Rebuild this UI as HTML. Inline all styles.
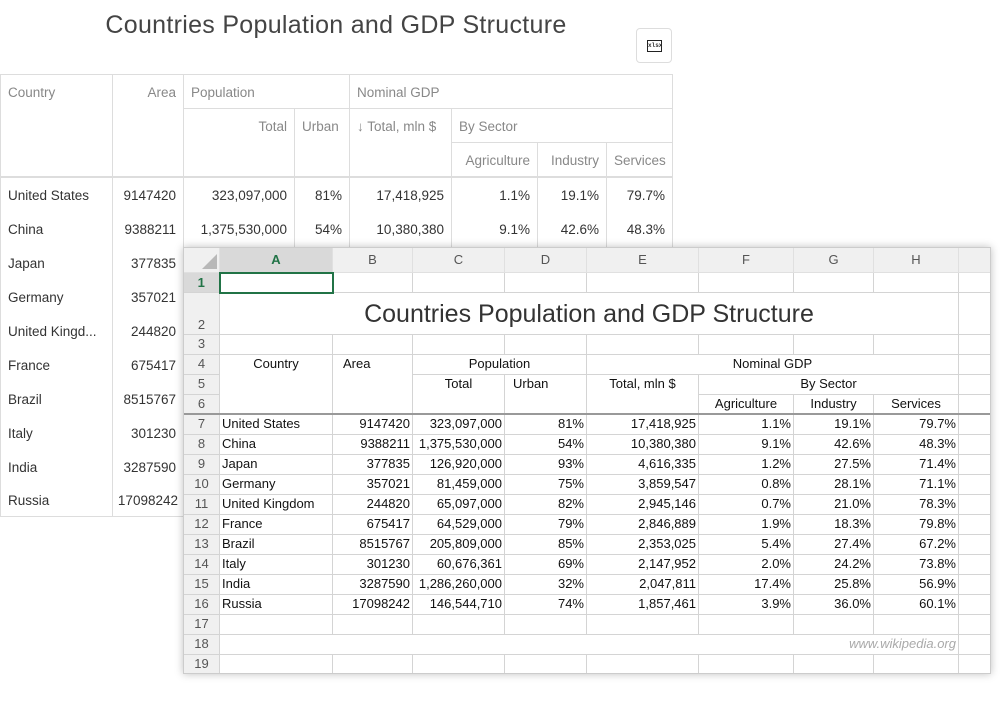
<!DOCTYPE html>
<html><head><meta charset="utf-8"><style>
*{box-sizing:border-box;margin:0;padding:0}
body{width:1008px;height:706px;background:#fff;font-family:"Liberation Sans",sans-serif;position:relative;overflow:hidden}
.title{position:absolute;left:0;width:672px;top:11px;text-align:center;font-size:25px;color:#444;font-weight:normal;letter-spacing:0.3px}
.btn{position:absolute;left:636px;top:28px;width:36px;height:35px;border:1px solid #ddd;border-radius:4px;background:#fff}
.btn span{position:absolute;left:10px;top:11px;width:15px;height:12px;border:1.5px solid #222;font:bold 6px "Liberation Mono",monospace;line-height:9px;text-align:center;color:#333;background:#fff}
table.g{position:absolute;left:0;top:74px;width:672px;border-collapse:collapse;table-layout:fixed;font-size:13.5px;color:#333}
table.g td{border:1px solid #ddd;height:34px;padding:0 7px;white-space:nowrap;overflow:hidden}
table.g .h{color:#888;vertical-align:top;padding-top:10px}
table.g tr.b td{border-top:none;border-bottom:none;padding-top:3px}
table.g tr.f td{border-top:2px solid #ddd}
.r{text-align:right}
.x{position:absolute;left:183px;top:247px;width:808px;height:427px;background:#fff;box-shadow:0 0 8px rgba(0,0,0,.25);border:1px solid #ccc;overflow:hidden}
table.e{border-collapse:collapse;table-layout:fixed;width:815px;font-size:13px;color:#111;position:absolute;left:-1px;top:-1px}
table.e td{border:1px solid #d4d4d4;height:20px;padding:0 2px;white-space:nowrap;overflow:hidden;line-height:18px}
table.e td.rh{background:#f0f0f0;color:#555;text-align:center;border-color:#d4d4d4}
table.e tr.ch td{background:#f0f0f0;color:#555;text-align:center;height:25px;border-color:#e0e0e0}
table.e td.c{text-align:center}
table.e tr.t7 td{border-top:2px solid #999}
</style></head><body>
<div class="title">Countries Population and GDP Structure</div>
<div class="btn"><span>xlsx</span></div>
<table class="g">
<colgroup><col style="width:112px"><col style="width:71px"><col style="width:111px"><col style="width:55px"><col style="width:102px"><col style="width:86px"><col style="width:69px"><col style="width:66px"></colgroup>
<tr><td class="h" rowspan="3">Country</td><td class="h r" rowspan="3">Area</td><td class="h" colspan="2">Population</td><td class="h" colspan="4">Nominal GDP</td></tr>
<tr><td class="h r" rowspan="2">Total</td><td class="h" rowspan="2">Urban</td><td class="h" rowspan="2">↓ Total, mln $</td><td class="h" colspan="3">By Sector</td></tr>
<tr><td class="h r">Agriculture</td><td class="h r">Industry</td><td class="h r">Services</td></tr>
<tr class="b f"><td>United States</td><td class="r">9147420</td><td class="r">323,097,000</td><td class="r">81%</td><td class="r">17,418,925</td><td class="r">1.1%</td><td class="r">19.1%</td><td class="r">79.7%</td></tr>
<tr class="b"><td>China</td><td class="r">9388211</td><td class="r">1,375,530,000</td><td class="r">54%</td><td class="r">10,380,380</td><td class="r">9.1%</td><td class="r">42.6%</td><td class="r">48.3%</td></tr>
<tr class="b"><td>Japan</td><td class="r">377835</td><td></td><td></td><td></td><td></td><td></td><td></td></tr>
<tr class="b"><td>Germany</td><td class="r">357021</td><td></td><td></td><td></td><td></td><td></td><td></td></tr>
<tr class="b"><td>United Kingd...</td><td class="r">244820</td><td></td><td></td><td></td><td></td><td></td><td></td></tr>
<tr class="b"><td>France</td><td class="r">675417</td><td></td><td></td><td></td><td></td><td></td><td></td></tr>
<tr class="b"><td>Brazil</td><td class="r">8515767</td><td></td><td></td><td></td><td></td><td></td><td></td></tr>
<tr class="b"><td>Italy</td><td class="r">301230</td><td></td><td></td><td></td><td></td><td></td><td></td></tr>
<tr class="b"><td>India</td><td class="r">3287590</td><td></td><td></td><td></td><td></td><td></td><td></td></tr>
<tr class="b"><td style="border-bottom:1px solid #ddd">Russia</td><td class="r" style="border-bottom:1px solid #ddd;padding-left:2px;padding-right:5px">17098242</td><td></td><td></td><td></td><td></td><td></td><td></td></tr>
</table>
<div class="x">
<table class="e">
<colgroup><col style="width:36px"><col style="width:113px"><col style="width:80px"><col style="width:92px"><col style="width:82px"><col style="width:112px"><col style="width:95px"><col style="width:80px"><col style="width:85px"><col style="width:40px"></colgroup>
<tr class="ch"><td style="background:#f0f0f0;position:relative"><div style="position:absolute;right:2px;bottom:3px;width:0;height:0;border-left:15px solid transparent;border-bottom:15px solid #b8b8b8"></div></td><td style="background:#d9d9d9;color:#217346;font-weight:bold;border-bottom:2px solid #217346">A</td><td>B</td><td>C</td><td>D</td><td>E</td><td>F</td><td>G</td><td>H</td><td></td></tr>
<tr><td class="rh" style="background:#d9d9d9;color:#217346;font-weight:bold">1</td><td style="border:2px solid #217346"></td><td></td><td></td><td></td><td></td><td></td><td></td><td></td><td></td></tr>
<tr><td class="rh" style="height:40px;vertical-align:bottom">2</td><td colspan="8" style="font-size:25px;text-align:center;color:#333;height:40px;line-height:40px">Countries Population and GDP Structure</td><td></td></tr>
<tr><td class="rh">3</td><td></td><td></td><td></td><td></td><td></td><td></td><td></td><td></td><td></td></tr>
<tr><td class="rh">4</td><td rowspan="3" class="c" style="vertical-align:top">Country</td><td rowspan="3" style="vertical-align:top;padding-left:10px">Area</td><td colspan="2" class="c">Population</td><td colspan="4" class="c">Nominal GDP</td><td></td></tr>
<tr><td class="rh">5</td><td rowspan="2" class="c" style="vertical-align:top">Total</td><td rowspan="2" style="vertical-align:top;padding-left:8px">Urban</td><td rowspan="2" class="c" style="vertical-align:top">Total, mln $</td><td colspan="3" class="c">By Sector</td><td></td></tr>
<tr><td class="rh">6</td><td class="c">Agriculture</td><td class="c">Industry</td><td class="c">Services</td><td></td></tr>
<tr class="t7"><td class="rh">7</td><td>United States</td><td class="r">9147420</td><td class="r">323,097,000</td><td class="r">81%</td><td class="r">17,418,925</td><td class="r">1.1%</td><td class="r">19.1%</td><td class="r">79.7%</td><td></td></tr>
<tr><td class="rh">8</td><td>China</td><td class="r">9388211</td><td class="r">1,375,530,000</td><td class="r">54%</td><td class="r">10,380,380</td><td class="r">9.1%</td><td class="r">42.6%</td><td class="r">48.3%</td><td></td></tr>
<tr><td class="rh">9</td><td>Japan</td><td class="r">377835</td><td class="r">126,920,000</td><td class="r">93%</td><td class="r">4,616,335</td><td class="r">1.2%</td><td class="r">27.5%</td><td class="r">71.4%</td><td></td></tr>
<tr><td class="rh">10</td><td>Germany</td><td class="r">357021</td><td class="r">81,459,000</td><td class="r">75%</td><td class="r">3,859,547</td><td class="r">0.8%</td><td class="r">28.1%</td><td class="r">71.1%</td><td></td></tr>
<tr><td class="rh">11</td><td>United Kingdom</td><td class="r">244820</td><td class="r">65,097,000</td><td class="r">82%</td><td class="r">2,945,146</td><td class="r">0.7%</td><td class="r">21.0%</td><td class="r">78.3%</td><td></td></tr>
<tr><td class="rh">12</td><td>France</td><td class="r">675417</td><td class="r">64,529,000</td><td class="r">79%</td><td class="r">2,846,889</td><td class="r">1.9%</td><td class="r">18.3%</td><td class="r">79.8%</td><td></td></tr>
<tr><td class="rh">13</td><td>Brazil</td><td class="r">8515767</td><td class="r">205,809,000</td><td class="r">85%</td><td class="r">2,353,025</td><td class="r">5.4%</td><td class="r">27.4%</td><td class="r">67.2%</td><td></td></tr>
<tr><td class="rh">14</td><td>Italy</td><td class="r">301230</td><td class="r">60,676,361</td><td class="r">69%</td><td class="r">2,147,952</td><td class="r">2.0%</td><td class="r">24.2%</td><td class="r">73.8%</td><td></td></tr>
<tr><td class="rh">15</td><td>India</td><td class="r">3287590</td><td class="r">1,286,260,000</td><td class="r">32%</td><td class="r">2,047,811</td><td class="r">17.4%</td><td class="r">25.8%</td><td class="r">56.9%</td><td></td></tr>
<tr><td class="rh">16</td><td>Russia</td><td class="r">17098242</td><td class="r">146,544,710</td><td class="r">74%</td><td class="r">1,857,461</td><td class="r">3.9%</td><td class="r">36.0%</td><td class="r">60.1%</td><td></td></tr>
<tr><td class="rh">17</td><td></td><td></td><td></td><td></td><td></td><td></td><td></td><td></td><td></td></tr>
<tr><td class="rh">18</td><td colspan="8" class="r" style="color:#aaa;font-style:italic">www.wikipedia.org</td><td></td></tr>
<tr><td class="rh">19</td><td></td><td></td><td></td><td></td><td></td><td></td><td></td><td></td><td></td></tr>
</table>
</div>
</body></html>
